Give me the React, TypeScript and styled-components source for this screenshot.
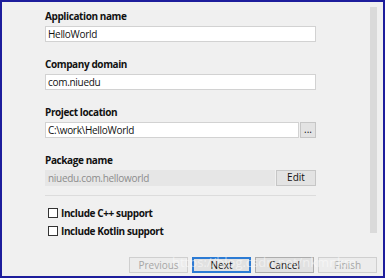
import React from "react";
import styled, { createGlobalStyle } from "styled-components";

const GlobalStyle = createGlobalStyle`
    body {
        margin: 0;
        background: #ffffff;
        font-family: "Open Sans", "Noto Sans", sans-serif;
    }
`;

const Frame = styled.div`
    position: relative;
    width: 385px;
    height: 278px;
    box-sizing: border-box;
    border: 2px solid #1d1d9c;
    background: #f0f0f0;
    display: flex;
    flex-direction: column;
`;

const Main = styled.div`
    flex: 1;
    display: flex;
`;

const Form = styled.div`
    flex: 1;
    padding: 7px 0 0 43px;
`;

const Field = styled.div`
    width: 271px;
    margin-bottom: 15px;
`;

const Label = styled.div`
    font-size: 10px;
    font-weight: 700;
    letter-spacing: -0.4px;
    color: #111;
    line-height: 14px;
    margin-bottom: 3px;
`;

const Row = styled.div`
    display: flex;
    gap: 1px;
`;

const Input = styled.div<{ $disabled?: boolean }>`
    flex: 1;
    height: 16px;
    box-sizing: border-box;
    border: 1px solid ${(p) => (p.$disabled ? "#e6e6e6" : "#d2d2d2")};
    background: ${(p) => (p.$disabled ? "#e6e6e6" : "#ffffff")};
    color: ${(p) => (p.$disabled ? "#8c8c8c" : "#111")};
    font-size: 10px;
    letter-spacing: -0.3px;
    line-height: 14px;
    padding-left: 2px;
    white-space: nowrap;
`;

const SmallButton = styled.div<{ $w: number }>`
    width: ${(p) => p.$w}px;
    height: 16px;
    box-sizing: border-box;
    border: 1px solid #c6c6c6;
    background: #e3e3e3;
    font-size: 10px;
    line-height: 13px;
    color: #111;
    text-align: center;
`;

const Separator = styled.div`
    width: 271px;
    height: 1px;
    background: #dcdcdc;
    margin: -6px 0 8px;
`;

const CheckRow = styled.label`
    display: flex;
    align-items: center;
    gap: 3px;
    height: 18px;
    padding-left: 3px;
    font-size: 10px;
    font-weight: 700;
    letter-spacing: -0.4px;
    color: #111;
`;

const Box = styled.span`
    width: 10px;
    height: 10px;
    box-sizing: border-box;
    border: 1px solid #333;
    background: #fff;
`;

const Scrollbar = styled.div`
    width: 7px;
    margin: 5px 6px 0 0;
    height: 226px;
    background: #dadada;
`;

const Footer = styled.div`
    display: flex;
    justify-content: flex-end;
    gap: 4px;
    padding: 0 6px 3px 0;
`;

const WizardButton = styled.div<{ $disabled?: boolean; $focused?: boolean }>`
    width: 59px;
    height: 16px;
    box-sizing: border-box;
    border: ${(p) => (p.$focused ? "2px solid #2c7bd4" : "1px solid " + (p.$disabled ? "#cfcfcf" : "#adadad"))};
    background: ${(p) => (p.$disabled ? "#ececec" : "#e1e1e1")};
    color: ${(p) => (p.$disabled ? "#a6a6a6" : "#111")};
    font-size: 10px;
    line-height: ${(p) => (p.$focused ? "12px" : "14px")};
    text-align: center;
`;

const Watermark = styled.div`
    position: absolute;
    left: 170px;
    bottom: 5px;
    font-size: 13px;
    color: rgba(255, 255, 255, 0.5);
    white-space: nowrap;
    pointer-events: none;
`;

const App = () => {
    return (
        <>
            <GlobalStyle />
            <Frame>
                <Main>
                    <Form>
                        <Field>
                            <Label>Application name</Label>
                            <Input>HelloWorld</Input>
                        </Field>
                        <Field>
                            <Label>Company domain</Label>
                            <Input>com.niuedu</Input>
                        </Field>
                        <Field>
                            <Label>Project location</Label>
                            <Row>
                                <Input>C:\work\HelloWorld</Input>
                                <SmallButton $w={16}>...</SmallButton>
                            </Row>
                        </Field>
                        <Field>
                            <Label>Package name</Label>
                            <Row>
                                <Input $disabled>niuedu.com.helloworld</Input>
                                <SmallButton $w={40}>Edit</SmallButton>
                            </Row>
                        </Field>
                        <Separator />
                        <CheckRow>
                            <Box />
                            Include C++ support
                        </CheckRow>
                        <CheckRow>
                            <Box />
                            Include Kotlin support
                        </CheckRow>
                    </Form>
                    <Scrollbar />
                </Main>
                <Footer>
                    <WizardButton $disabled>Previous</WizardButton>
                    <WizardButton $focused>Next</WizardButton>
                    <WizardButton>Cancel</WizardButton>
                    <WizardButton $disabled>Finish</WizardButton>
                </Footer>
                <Watermark>https://blog.csdn.net/nkmnkm</Watermark>
            </Frame>
        </>
    );
};

export default App;
